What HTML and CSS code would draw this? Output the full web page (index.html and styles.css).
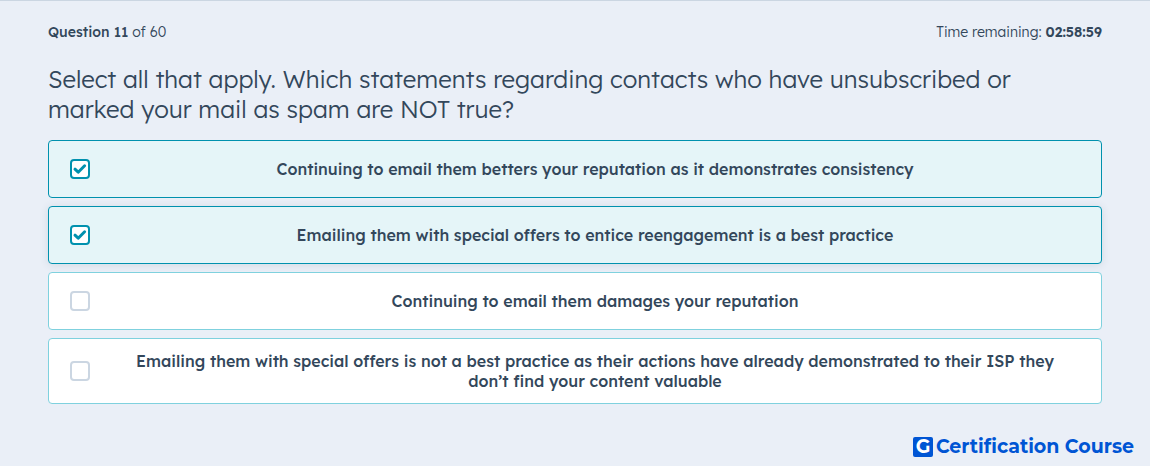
FILE: index.html
```html
<!DOCTYPE html>
<html lang="en">
<head>
  <meta charset="UTF-8" />
  <meta name="viewport" content="width=device-width, initial-scale=1.0"/>
  <title>Certification Course</title>
  <link rel="stylesheet" href="styles.css">
</head>
<body>

  <main class="exam">
    <!-- Progress and timer -->
    <header class="exam-header">
      <div><strong class="progress">Question 11</strong> of 60</div>
      <div>Time remaining: <strong class="timer">02:58:59</strong></div>
    </header>

    <!-- Question -->
    <h1 class="question" id="question">Select all that apply. Which statements regarding contacts who have unsubscribed or marked your mail as spam are NOT true?</h1>

    <!-- Answers -->
    <form class="answers" aria-labelledby="question">
      <label class="answer" for="answer1">
        <span class="check">
          <input type="checkbox" id="answer1" name="answer" value="1" checked>
          <svg viewBox="0 0 20 20" aria-hidden="true"><path d="M5 10.2 L8.2 13.2 L14.6 6.8"/></svg>
        </span>
        <span class="answer-text">Continuing to email them betters your reputation as it demonstrates consistency</span>
      </label>

      <label class="answer answer-active" for="answer2">
        <span class="check">
          <input type="checkbox" id="answer2" name="answer" value="2" checked>
          <svg viewBox="0 0 20 20" aria-hidden="true"><path d="M5 10.2 L8.2 13.2 L14.6 6.8"/></svg>
        </span>
        <span class="answer-text">Emailing them with special offers to entice reengagement is a best practice</span>
      </label>

      <label class="answer" for="answer3">
        <span class="check">
          <input type="checkbox" id="answer3" name="answer" value="3">
          <svg viewBox="0 0 20 20" aria-hidden="true"><path d="M5 10.2 L8.2 13.2 L14.6 6.8"/></svg>
        </span>
        <span class="answer-text">Continuing to email them damages your reputation</span>
      </label>

      <label class="answer" for="answer4">
        <span class="check">
          <input type="checkbox" id="answer4" name="answer" value="4">
          <svg viewBox="0 0 20 20" aria-hidden="true"><path d="M5 10.2 L8.2 13.2 L14.6 6.8"/></svg>
        </span>
        <span class="answer-text">Emailing them with special offers is not a best practice as their actions have already demonstrated to their ISP they don’t find your content valuable</span>
      </label>
    </form>
  </main>

  <footer class="brand">
    <span class="brand-mark">G</span>
    <span>Certification Course</span>
  </footer>

</body>
</html>
```

FILE: styles.css
```css
* { margin: 0; padding: 0; box-sizing: border-box; }

body {
  display: flex;
  flex-direction: column;
  min-height: 100vh;
  font-family: Lexend, Inter, sans-serif;
  font-size: 14px;
  line-height: 20px;
  color: #33475b;
  background: #eaeff7;
  border-top: 1px solid #cbd6e2;
}

.exam {
  padding: 21px 48px 0;
}

.exam-header {
  display: flex;
  justify-content: space-between;
  font-weight: 300;
}

.progress {
  font-weight: 500;
}

.timer {
  font-weight: 600;
}

.question {
  margin: 22px 0 16px;
  font-size: 24px;
  font-weight: 300;
  line-height: 30px;
}

.answers {
  display: flex;
  flex-direction: column;
  gap: 8px;
}

.answer {
  display: flex;
  align-items: center;
  gap: 20px;
  min-height: 58px;
  padding: 12px 21px;
  background: #fff;
  border: 1px solid #7fd1de;
  border-radius: 4px;
  cursor: pointer;
}

.answer:has(input:checked) {
  background: #e5f5f8;
  border-color: #0091ae;
}

.answer:hover,
.answer-active {
  box-shadow: 0 1px 8px rgba(45, 62, 80, 0.12);
}

.answer-text {
  flex: 1;
  padding: 0 20px;
  font-size: 16px;
  font-weight: 500;
  text-align: center;
}

.check {
  display: grid;
  width: 20px;
  height: 20px;
}

.check input,
.check svg {
  grid-area: 1 / 1;
  width: 20px;
  height: 20px;
}

.check input {
  appearance: none;
  background: #fff;
  border: 2px solid #cbd6e2;
  border-radius: 4px;
}

.check input:checked {
  border-color: #0091ae;
}

.check svg {
  display: none;
  fill: none;
  stroke: #0091ae;
  stroke-width: 3;
  stroke-linecap: round;
  stroke-linejoin: round;
  pointer-events: none;
}

.check input:checked + svg {
  display: block;
}

.brand {
  display: flex;
  justify-content: flex-end;
  align-items: center;
  gap: 3px;
  margin-top: auto;
  padding: 8px 16px 9px;
  font-family: Montserrat, Inter, sans-serif;
  font-size: 19px;
  font-weight: 700;
  color: #0055d4;
}

.brand-mark {
  width: 20px;
  height: 20px;
  border-radius: 2px;
  background: #0055d4;
  color: #fff;
  text-align: center;
}
```
